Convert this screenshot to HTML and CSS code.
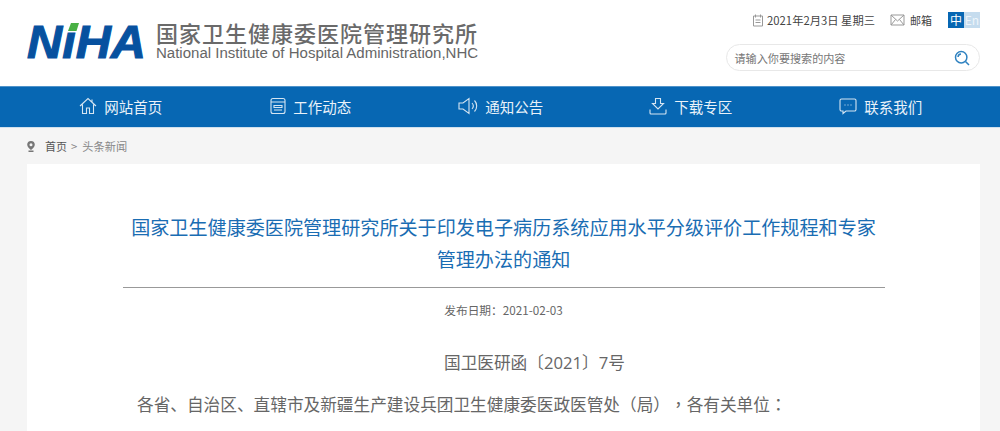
FILE: index.html
```html
<!DOCTYPE html>
<html lang="zh-CN">
<head>
<meta charset="utf-8">
<title>国家卫生健康委医院管理研究所</title>
<link rel="stylesheet" href="styles.css">
</head>
<body>
<header class="header">
  <div class="brand">
    <svg class="logo" viewBox="0 0 118 38" width="118" height="38" aria-label="NiHA">
      <text class="logo-text" x="0" y="36.500" textLength="119" lengthAdjust="spacingAndGlyphs">NıHA</text>
      <path class="logo-dot" d="M44 2h8l-2.500 8H41z"/>
    </svg>
    <div class="brand-text">
      <div class="brand-cn">国家卫生健康委医院管理研究所</div>
      <div class="brand-en">National Institute of Hospital Administration,NHC</div>
    </div>
  </div>
  <div class="tools">
    <div class="tools-top">
      <span class="tool date">
        <svg class="tool-icon" viewBox="0 0 12 13" width="12" height="13"><path d="M1.5 2h9v10h-9zM3.5.5v3M8.5.5v3M3.5 6h5M3.5 8.5h5" /></svg>
        2021年2月3日&nbsp;星期三
      </span>
      <span class="tool mail">
        <svg class="tool-icon" viewBox="0 0 15 12" width="15" height="12"><path d="M1 1h13v10H1zM1 1l6.5 6L14 1M1 11l4.5-5.5M14 11L9.500 5.500"/></svg>
        邮箱
      </span>
      <span class="lang"><span class="lang-on">中</span><span class="lang-off">En</span></span>
    </div>
    <div class="search">
      <span class="search-text">请输入你要搜索的内容</span>
      <svg class="search-icon" viewBox="0 0 16 16" width="16" height="16"><circle cx="7.200" cy="7.200" r="5.700"/><path d="M11.500 11.500l3.500 3.500M4 7a3.200 3.200 0 0 1 3-3"/></svg>
    </div>
  </div>
</header>

<nav class="nav">
  <a class="nav-item">
    <svg class="nav-icon" viewBox="0 0 18 18" width="18" height="18"><path d="M1 9l8-7.500L17 9M3.500 7.500V16.500h4V11h3v5.500h4V7.500M13 2.500v3"/></svg>网站首页
  </a>
  <a class="nav-item">
    <svg class="nav-icon" viewBox="0 0 16 18" width="16" height="18"><rect x="1" y="1.500" width="14" height="15" rx="2"/><path d="M1 5h14M4 8.500h8v2H4zM4 13h8"/></svg>工作动态
  </a>
  <a class="nav-item">
    <svg class="nav-icon" viewBox="0 0 20 18" width="20" height="18"><path d="M1 6v6h4l6 4.500v-15L5 6zM14 6a4.500 4.500 0 0 1 0 6M16.500 3.500a8 8 0 0 1 0 11"/></svg>通知公告
  </a>
  <a class="nav-item">
    <svg class="nav-icon" viewBox="0 0 18 18" width="18" height="18"><path d="M6.500 1.500h5v5h3L9 12 3.500 6.500h3zM1 12.500V16a1 1 0 0 0 1 1h14a1 1 0 0 0 1-1v-3.500"/></svg>下载专区
  </a>
  <a class="nav-item">
    <svg class="nav-icon" viewBox="0 0 18 18" width="18" height="18"><path d="M2.500 2h13A1.500 1.500 0 0 1 17 3.500v9a1.500 1.500 0 0 1-1.500 1.500H7l-3 2.500V14H2.500A1.500 1.500 0 0 1 1 12.500v-9A1.500 1.500 0 0 1 2.500 2zM5.500 8h1M8.500 8h1M11.500 8h1"/></svg>联系我们
  </a>
</nav>

<main class="page">
  <div class="crumbs">
    <svg class="pin" viewBox="0 0 8 11" width="8" height="11"><path fill-rule="evenodd" d="M4 0a3.800 3.800 0 0 1 3.800 3.800C7.800 6 5.500 7.800 4 9 2.500 7.800.2 6 .2 3.800A3.800 3.800 0 0 1 4 0zm0 2.300a1.500 1.500 0 1 0 0 3 1.500 1.500 0 0 0 0-3zM1.500 9.600h5V11h-5z"/></svg>
    <span class="crumb-home">首页</span>
    <span class="crumb-sep">&gt;</span>
    <span class="crumb-now">头条新闻</span>
  </div>
  <article class="card">
    <h1 class="title">国家卫生健康委医院管理研究所关于印发电子病历系统应用水平分级评价工作规程和专家管理办法的通知</h1>
    <div class="meta">发布日期：2021-02-03</div>
    <p class="docno">国卫医研函〔2021〕7号</p>
    <p class="para">各省、自治区、直辖市及新疆生产建设兵团卫生健康委医政医管处<span class="punct" lang="zh-TW">（</span>局<span class="punct" lang="zh-TW">），</span>各有关单位<span class="punct" lang="zh-TW">：</span></p>
  </article>
</main>
</body>
</html>
```
FILE: styles.css
```css
* { box-sizing: border-box; }
html, body { margin: 0; }
html { height: 431px; overflow: hidden; }
body {
  height: 431px;
  overflow: hidden;
  background: #f5f5f5;
  color: #333;
  font-family: "Noto Sans CJK SC", "Noto Sans", sans-serif;
  text-spacing-trim: space-all;
}
.header {
  height: 86px;
  background: #fff;
  display: flex;
  justify-content: space-between;
  padding: 12px 20px 0 27px;
}
.brand { display: flex; align-items: flex-start; gap: 11px; padding-top: 9px; }
.logo { display: block; overflow: visible; }
.logo-text {
  font: italic 700 46px "Liberation Sans", sans-serif;
  fill: #07519f;
  stroke: #07519f;
  stroke-width: 1.100px;
}
.logo-dot { fill: #49b044; }
.brand-text { width: 323px; }
.brand-cn {
  font-size: 22px;
  line-height: 23px;
  letter-spacing: 1px;
  font-weight: 500;
  white-space: nowrap;
  color: #6a6a6a;
}
.brand-en {
  font-family: "Liberation Sans", sans-serif;
  font-size: 15.030px;
  line-height: 17px;
  white-space: nowrap;
  color: #666;
}
.tools { width: 254px; display: flex; flex-direction: column; }
.tools-top {
  display: flex;
  align-items: center;
  justify-content: flex-end;
  height: 16px;
  font-size: 11px;
  color: #444;
}
.tool { display: flex; align-items: center; white-space: nowrap; }
.date { font-size: 11.300px; }
.tool-icon { fill: none; stroke: #999; stroke-width: 1; flex: none; }
.date .tool-icon { margin-right: 3px; }
.mail { margin-left: 15px; }
.mail .tool-icon { margin-right: 5px; }
.lang { display: flex; margin-left: 16px; height: 16px; font-size: 12px; line-height: 16px; text-align: center; }
.lang-on { width: 16px; background: #0767b3; color: #fff; }
.lang-off { width: 16px; background: #c5dcee; color: #eef5fa; }
.search {
  margin-top: 16px;
  height: 27px;
  border: 1px solid #e8e8e8;
  border-radius: 14px;
  display: flex;
  align-items: center;
  justify-content: space-between;
  padding: 0 9px 0 7.500px;
  background: #fff;
}
.search-text { font-size: 11.100px; color: #777; }
.search-icon { fill: none; stroke: #2f82c0; stroke-width: 1.500; }
.nav {
  height: 42px;
  background: #0767b3;
  border-top: 1px solid #4f93ca;
  border-bottom: 1px solid #cfe0ee;
  display: grid;
  grid-template-columns: repeat(5, 190px);
  padding: 0 0 2px 25.800px;
}
.nav-item {
  display: flex;
  align-items: center;
  justify-content: center;
  gap: 7px;
  color: #eaf2f9;
  font-size: 14.500px;
  white-space: nowrap;
}
.nav-icon { fill: none; stroke: #d5e5f2; stroke-width: 1.100; flex: none; }
.page { padding: 0 20px 0 27px; }
.crumbs {
  height: 36px;
  display: flex;
  align-items: center;
  font-size: 11.250px;
  color: #888;
}
.pin { fill: #777; margin-right: 10px; }
.crumb-home { color: #555; font-size: 11px; }
.crumb-sep { margin: 0 5px 0 4px; }
.card {
  background: #fff;
  height: 267px;
  padding-top: 47px;
  display: flex;
  flex-direction: column;
  align-items: center;
}
.title {
  width: 762px;
  margin: 0;
  padding: 0 8px 12px;
  border-bottom: 1px solid #999;
  text-align: center;
  font-size: 19.100px;
  line-height: 32px;
  font-weight: 400;
  color: #1a6db3;
}
.meta { margin-top: 14px; font-size: 11.700px; line-height: 16px; color: #666; }
.docno {
  margin: 33px 0 0;
  align-self: flex-start;
  padding-left: 417px;
  font-family: "Open Sans", "Noto Sans CJK SC", sans-serif;
  font-size: 16.670px;
  line-height: 24px;
  color: #666;
}
.para {
  margin: 17px 0 0;
  align-self: flex-start;
  padding-left: 110px;
  font-size: 16.670px;
  line-height: 24px;
  color: #666;
  white-space: nowrap;
}
.punct { font-family: "Noto Sans CJK TC", sans-serif; }
```
